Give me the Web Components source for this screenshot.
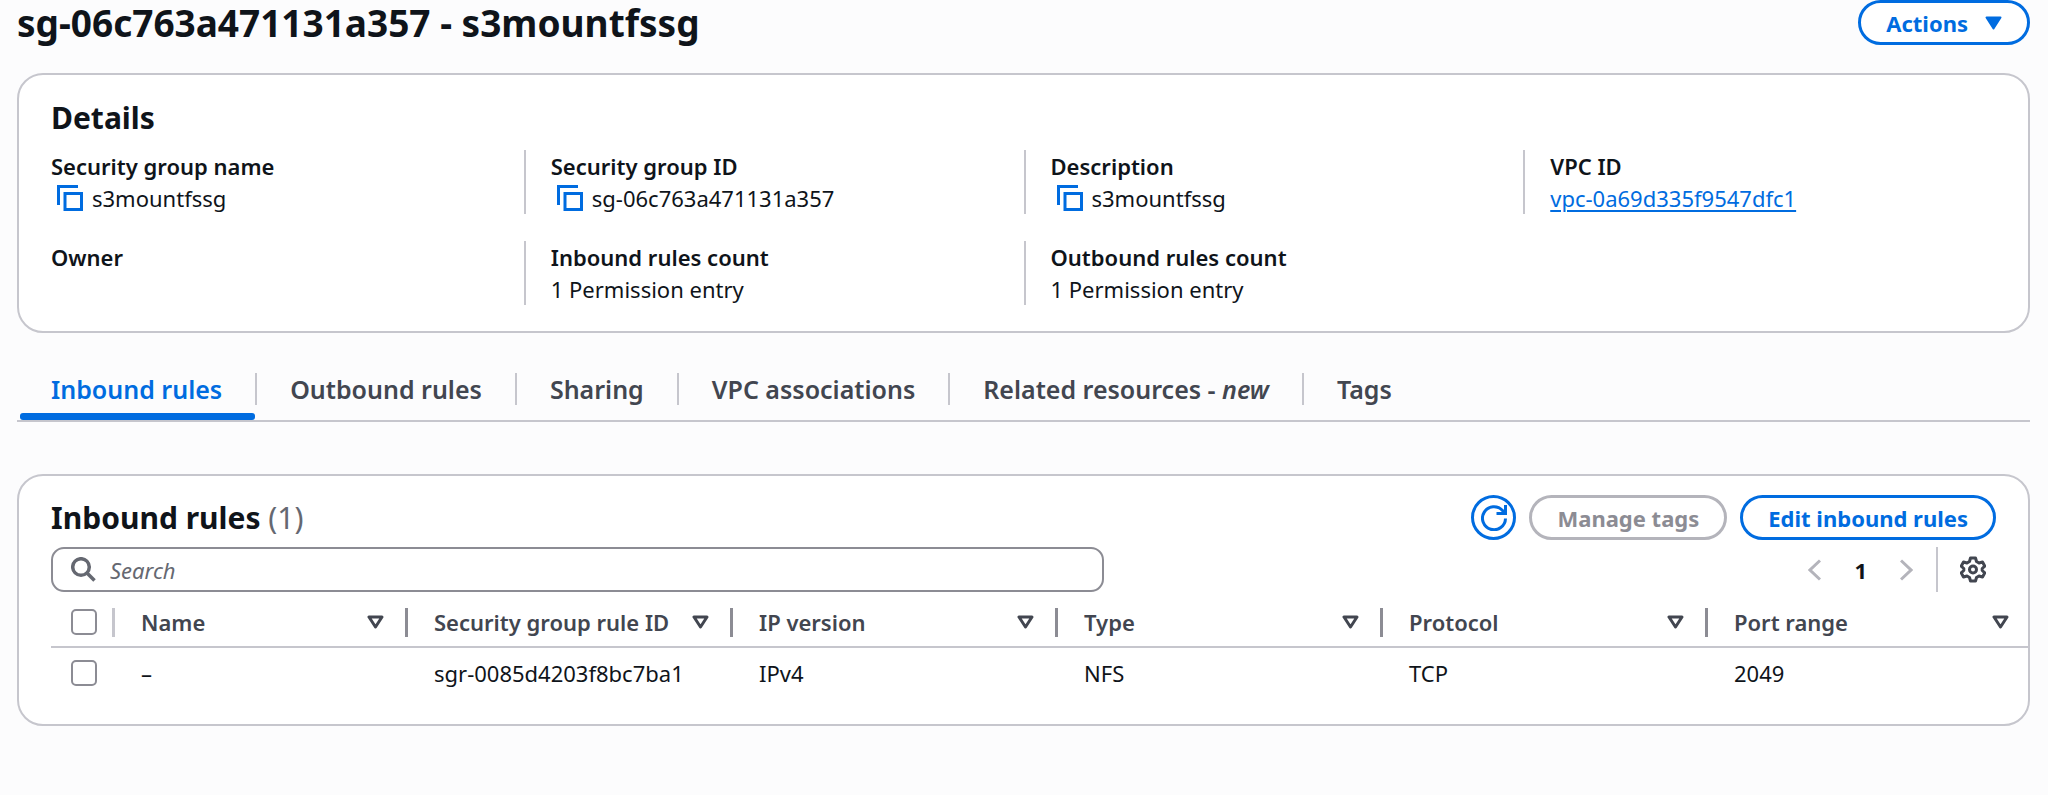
<!DOCTYPE html>
<html lang="en">
<head>
<meta charset="utf-8">
<meta name="viewport" content="width=device-width, initial-scale=1">
<title>Security group</title>
<style>
    body {
        --text: #0f141a;
        --muted: #656871;
        --dark: #424650;
        --line: #c6c6cd;
        --field: #8c8c94;
        --blue: #006ce0;
        --disabled: #b4b4bb;
        margin: 0;
        background: #fcfcfd;
        color: var(--text);
        font: 22px/32px "Noto Sans", "Open Sans", sans-serif;
    }

    main {
        display: flex;
        flex-direction: column;
        padding: 0 18px 0 17px;
    }
</style>
</head>
<body>
<main>
    <page-header heading="sg-06c763a471131a357 - s3mountfssg">
        <pill-button caret>Actions</pill-button>
    </page-header>

    <details-card heading="Details">
        <detail-item label="Security group name" copy>s3mountfssg</detail-item>
        <detail-item label="Security group ID" copy>sg-06c763a471131a357</detail-item>
        <detail-item label="Description" copy>s3mountfssg</detail-item>
        <detail-item label="VPC ID" href="#vpc">vpc-0a69d335f9547dfc1</detail-item>
        <detail-item label="Owner"></detail-item>
        <detail-item label="Inbound rules count">1 Permission entry</detail-item>
        <detail-item label="Outbound rules count">1 Permission entry</detail-item>
    </details-card>

    <tab-bar>
        <tab-item active>Inbound rules</tab-item>
        <tab-item>Outbound rules</tab-item>
        <tab-item>Sharing</tab-item>
        <tab-item>VPC associations</tab-item>
        <tab-item>Related resources - <i>new</i></tab-item>
        <tab-item>Tags</tab-item>
    </tab-bar>

    <rules-card heading="Inbound rules" count="(1)">
        <pill-button slot="actions" icon="refresh" label="Refresh"></pill-button>
        <pill-button slot="actions" disabled>Manage tags</pill-button>
        <pill-button slot="actions">Edit inbound rules</pill-button>
        <search-box slot="tools"></search-box>
        <page-nav slot="tools"></page-nav>
        <rules-table></rules-table>
    </rules-card>
</main>

<script>
// Icons shared by the elements below
const icons = {
    caret: `<svg width="17" height="14" viewBox="0 0 17 14" aria-hidden="true"><path d="M1.5 1.5h14l-7 11z" fill="currentColor" stroke="currentColor" stroke-width="2" stroke-linejoin="round"/></svg>`,
    sort: `<svg width="17" height="14" viewBox="0 0 17 14" aria-hidden="true"><path d="M2 2h13L8.500 12z" fill="none" stroke="currentColor" stroke-width="3" stroke-linejoin="round"/></svg>`,
    copy: `<svg width="26" height="26" viewBox="0 0 26 26" fill="none" stroke="currentColor" stroke-width="3" aria-hidden="true"><path d="M1.5 20V1.5H21"/><path d="M8 8.5h16.500v16H8z"/></svg>`,
    refresh: `<svg width="26" height="26" viewBox="0 0 26 26" fill="none" stroke="currentColor" stroke-width="3" aria-hidden="true"><path d="M24.500 13.500A11.500 11.500 0 1 1 21.500 5.500l2 2.500"/><path d="M24.500 0v8.500H15.500"/></svg>`,
    search: `<svg width="25" height="25" viewBox="0 0 25 25" fill="none" stroke="currentColor" stroke-width="3.5" aria-hidden="true"><circle cx="10" cy="10" r="8.300"/><path d="M16 16l7.500 7.500"/></svg>`,
    prev: `<svg width="13" height="22" viewBox="0 0 13 22" fill="none" stroke="currentColor" stroke-width="3" aria-hidden="true"><path d="M12 1.500L2 11l10 9.500"/></svg>`,
    next: `<svg width="13" height="22" viewBox="0 0 13 22" fill="none" stroke="currentColor" stroke-width="3" aria-hidden="true"><path d="M1 1.500L11 11 1 20.500"/></svg>`,
    gear: `<svg width="26" height="27" viewBox="0 0 26 27" fill="none" stroke="currentColor" stroke-width="3" stroke-linejoin="round" aria-hidden="true"><circle cx="13" cy="13.500" r="3.500"/><path d="M10.500 2h5l1 3.500 2.500 1.500 3.500-1 2.300 4.200-2.600 2.300v2l2.600 2.300-2.300 4.200-3.500-1-2.500 1.500-1 3.500h-5l-1-3.500-2.500-1.500-3.500 1-2.300-4.200 2.600-2.300v-2L1.200 10.200 3.500 6l3.500 1 2.500-1.500z"/></svg>`
};


class PageHeader extends HTMLElement {
    connectedCallback() {
        this.attachShadow({ mode: 'open' }).innerHTML = `
            <style>
                :host {
                    display: flex;
                    justify-content: space-between;
                    align-items: flex-start;
                    margin-bottom: 27px;
                }

                h1 {
                    margin: 0;
                    font-size: 37px;
                    line-height: 46px;
                    font-weight: 700;
                }
            </style>
            <h1>${this.getAttribute('heading')}</h1>
            <slot></slot>
        `;
    }
}

customElements.define('page-header', PageHeader);


class PillButton extends HTMLElement {
    connectedCallback() {
        const icon = this.getAttribute('icon');

        this.attachShadow({ mode: 'open' }).innerHTML = `
            <style>
                :host {
                    display: block;
                }

                button {
                    display: flex;
                    align-items: center;
                    justify-content: center;
                    gap: 17px;
                    height: 45px;
                    padding: 0 25px;
                    border: 3px solid var(--blue);
                    border-radius: 23px;
                    background: #fff;
                    color: var(--blue);
                    font: inherit;
                    font-weight: 700;
                    white-space: nowrap;
                }

                button.icon {
                    width: 45px;
                    padding: 0;
                }

                button:disabled {
                    border-color: var(--disabled);
                    color: var(--field);
                }
            </style>
            <button type="button" ${icon ? `class="icon" aria-label="${this.getAttribute('label')}"` : ''} ${this.hasAttribute('disabled') ? 'disabled' : ''}>
                ${icon ? icons[icon] : '<slot></slot>'}
                ${this.hasAttribute('caret') ? icons.caret : ''}
            </button>
        `;
    }
}

customElements.define('pill-button', PillButton);


class DetailsCard extends HTMLElement {
    connectedCallback() {
        this.attachShadow({ mode: 'open' }).innerHTML = `
            <style>
                :host {
                    display: block;
                    padding: 23px 32px 26px;
                    border: 2px solid var(--line);
                    border-radius: 26px;
                    background: #fff;
                }

                h2 {
                    margin: 0 0 12px;
                    font-size: 30px;
                    line-height: 40px;
                    font-weight: 700;
                }

                .grid {
                    display: grid;
                    grid-template-columns: repeat(4, 1fr);
                    gap: 27px;
                    margin-left: -27px;
                }

                ::slotted(:nth-child(4n + 1)) {
                    border-left-color: transparent;
                }
            </style>
            <h2>${this.getAttribute('heading')}</h2>
            <div class="grid"><slot></slot></div>
        `;
    }
}

customElements.define('details-card', DetailsCard);


class DetailItem extends HTMLElement {
    connectedCallback() {
        const href = this.getAttribute('href');
        const label = this.getAttribute('label');

        this.attachShadow({ mode: 'open' }).innerHTML = `
            <style>
                :host {
                    display: block;
                    min-height: 64px;
                    padding-left: 25px;
                    border-left: 2px solid var(--line);
                }

                .label {
                    font-weight: 600;
                }

                .value {
                    display: flex;
                    align-items: center;
                }

                button {
                    display: flex;
                    margin: 0 9px 0 6px;
                    padding: 0;
                    border: 0;
                    background: none;
                    color: var(--blue);
                }

                a {
                    color: var(--blue);
                    text-underline-offset: 3px;
                    text-decoration-thickness: 2px;
                }
            </style>
            <div class="label">${label}</div>
            <div class="value">
                ${this.hasAttribute('copy') ? `<button type="button" aria-label="Copy ${label}">${icons.copy}</button>` : ''}
                ${href ? `<a href="${href}"><slot></slot></a>` : '<slot></slot>'}
            </div>
        `;

        if (this.hasAttribute('copy')) {
            this.shadowRoot.querySelector('button').addEventListener('click', () => {
                navigator.clipboard.writeText(this.textContent);
            });
        }
    }
}

customElements.define('detail-item', DetailItem);


class TabBar extends HTMLElement {
    connectedCallback() {
        this.attachShadow({ mode: 'open' }).innerHTML = `
            <style>
                :host {
                    display: flex;
                    margin: 40px 0 52px;
                    padding-left: 1px;
                    border-bottom: 2px solid var(--line);
                }
            </style>
            <slot></slot>
        `;

        this.addEventListener('click', (e) => {
            const tab = e.target.closest('tab-item');
            if (!tab) return;
            this.querySelectorAll('tab-item').forEach((t) => t.toggleAttribute('active', t === tab));
        });
    }
}

customElements.define('tab-bar', TabBar);


class TabItem extends HTMLElement {
    connectedCallback() {
        this.attachShadow({ mode: 'open' }).innerHTML = `
            <style>
                :host {
                    display: flex;
                    align-items: flex-start;
                }

                :host(:not(:last-child))::after {
                    content: "";
                    width: 2px;
                    height: 32px;
                    background: var(--line);
                }

                button {
                    position: relative;
                    padding: 0 33px 15px;
                    border: 0;
                    background: none;
                    color: var(--dark);
                    font: inherit;
                    font-size: 25px;
                    font-weight: 600;
                    white-space: nowrap;
                }

                :host([active]) button {
                    color: var(--blue);
                }

                :host([active]) button::after {
                    content: "";
                    position: absolute;
                    left: 2px;
                    right: 0;
                    bottom: 0;
                    height: 7px;
                    border-radius: 3px;
                    background: var(--blue);
                }
            </style>
            <button type="button"><slot></slot></button>
        `;
    }
}

customElements.define('tab-item', TabItem);


class RulesCard extends HTMLElement {
    connectedCallback() {
        this.attachShadow({ mode: 'open' }).innerHTML = `
            <style>
                :host {
                    display: block;
                    padding: 19px 0 27px 32px;
                    border: 2px solid var(--line);
                    border-radius: 26px;
                    background: #fff;
                    overflow: hidden;
                }

                header, .actions, .tools {
                    display: flex;
                    align-items: center;
                }

                header, .tools {
                    justify-content: space-between;
                    margin-right: 32px;
                }

                header {
                    margin-bottom: 7px;
                }

                .actions {
                    gap: 13px;
                }

                h2 {
                    margin: 0;
                    font-size: 30px;
                    line-height: 40px;
                    font-weight: 700;
                }

                h2 span {
                    color: var(--muted);
                    font-weight: 400;
                }
            </style>
            <header>
                <h2>${this.getAttribute('heading')} <span>${this.getAttribute('count')}</span></h2>
                <div class="actions"><slot name="actions"></slot></div>
            </header>
            <div class="tools"><slot name="tools"></slot></div>
            <slot></slot>
        `;
    }
}

customElements.define('rules-card', RulesCard);


class SearchBox extends HTMLElement {
    connectedCallback() {
        this.attachShadow({ mode: 'open' }).innerHTML = `
            <style>
                :host {
                    flex: 1;
                    max-width: 1053px;
                }

                label {
                    display: flex;
                    align-items: center;
                    gap: 14px;
                    box-sizing: border-box;
                    height: 45px;
                    padding: 0 18px;
                    border: 2px solid var(--field);
                    border-radius: 13px;
                    color: var(--muted);
                }

                input {
                    flex: 1;
                    min-width: 0;
                    padding: 0;
                    border: 0;
                    outline: 0;
                    background: none;
                    color: var(--text);
                    font: inherit;
                }

                input::placeholder {
                    color: var(--muted);
                    font-style: italic;
                }
            </style>
            <label>
                ${icons.search}
                <input type="text" placeholder="Search" aria-label="Search">
            </label>
        `;
    }
}

customElements.define('search-box', SearchBox);


class PageNav extends HTMLElement {
    connectedCallback() {
        this.attachShadow({ mode: 'open' }).innerHTML = `
            <style>
                :host, nav {
                    display: flex;
                    align-items: center;
                }

                nav {
                    gap: 33px;
                    height: 45px;
                    padding-right: 23px;
                    border-right: 2px solid var(--line);
                    box-sizing: border-box;
                }

                button {
                    display: flex;
                    padding: 0;
                    border: 0;
                    background: none;
                    color: var(--text);
                    font: inherit;
                    font-weight: 700;
                }

                button:disabled {
                    color: var(--disabled);
                }

                .settings {
                    margin: 0 10px 0 22px;
                    color: var(--dark);
                }
            </style>
            <nav aria-label="Pages">
                <button type="button" disabled aria-label="Previous page">${icons.prev}</button>
                <button type="button" aria-current="page">1</button>
                <button type="button" disabled aria-label="Next page">${icons.next}</button>
            </nav>
            <button type="button" class="settings" aria-label="Preferences">${icons.gear}</button>
        `;
    }
}

customElements.define('page-nav', PageNav);


class RulesTable extends HTMLElement {
    columns = ['Name', 'Security group rule ID', 'IP version', 'Type', 'Protocol', 'Port range'];
    rows = [
        ['–', 'sgr-0085d4203f8bc7ba1', 'IPv4', 'NFS', 'TCP', '2049']
    ];

    connectedCallback() {
        this.attachShadow({ mode: 'open' }).innerHTML = `
            <style>
                :host {
                    display: block;
                    overflow: hidden;
                }

                /* the last column runs a little past the card */
                table {
                    width: calc(100% + 5px);
                    table-layout: fixed;
                    border-collapse: separate;
                    border-spacing: 0;
                }

                .check {
                    width: 64px;
                }

                .first {
                    width: 293px;
                }

                th, td {
                    padding: 9px 0 8px 26px;
                    text-align: left;
                    white-space: nowrap;
                }

                th {
                    padding: 14px 0 8px 26px;
                    border-bottom: 2px solid var(--line);
                    color: var(--dark);
                    font-weight: 600;
                }

                th:first-child, td:first-child {
                    padding-left: 20px;
                }

                .head {
                    display: flex;
                    align-items: center;
                    justify-content: space-between;
                    height: 32px;
                }

                .head button {
                    display: flex;
                    flex: 1;
                    align-items: center;
                    justify-content: space-between;
                    padding: 0;
                    border: 0;
                    background: none;
                    color: inherit;
                    font: inherit;
                }

                .head::after {
                    content: "";
                    width: 3px;
                    height: 29px;
                    margin-left: 21px;
                    background: var(--field);
                }

                th:first-child .head::after {
                    margin-left: 0;
                    background: var(--line);
                }

                input {
                    display: block;
                    appearance: none;
                    box-sizing: border-box;
                    width: 26px;
                    height: 26px;
                    margin: 0;
                    border: 2px solid var(--field);
                    border-radius: 5px;
                    background: #fff;
                }

                input:checked {
                    border-color: var(--blue);
                    background: var(--blue);
                }
            </style>
            <table>
                <colgroup>
                    <col class="check">
                    <col class="first">
                    <col span="5">
                </colgroup>
                <thead>
                    <tr>
                        <th scope="col"><div class="head"><input type="checkbox" aria-label="Select all rules"></div></th>
                        ${this.columns.map((name) => `<th scope="col"><div class="head"><button type="button">${name}${icons.sort}</button></div></th>`).join('')}
                    </tr>
                </thead>
                <tbody>
                    ${this.rows.map((row) => `
                        <tr>
                            <td><input type="checkbox" aria-label="Select ${row[1]}"></td>
                            ${row.map((cell) => `<td>${cell}</td>`).join('')}
                        </tr>
                    `).join('')}
                </tbody>
            </table>
        `;

        const [all, ...boxes] = this.shadowRoot.querySelectorAll('input');
        all.addEventListener('change', () => boxes.forEach((box) => box.checked = all.checked));
    }
}

customElements.define('rules-table', RulesTable);
</script>
</body>
</html>
